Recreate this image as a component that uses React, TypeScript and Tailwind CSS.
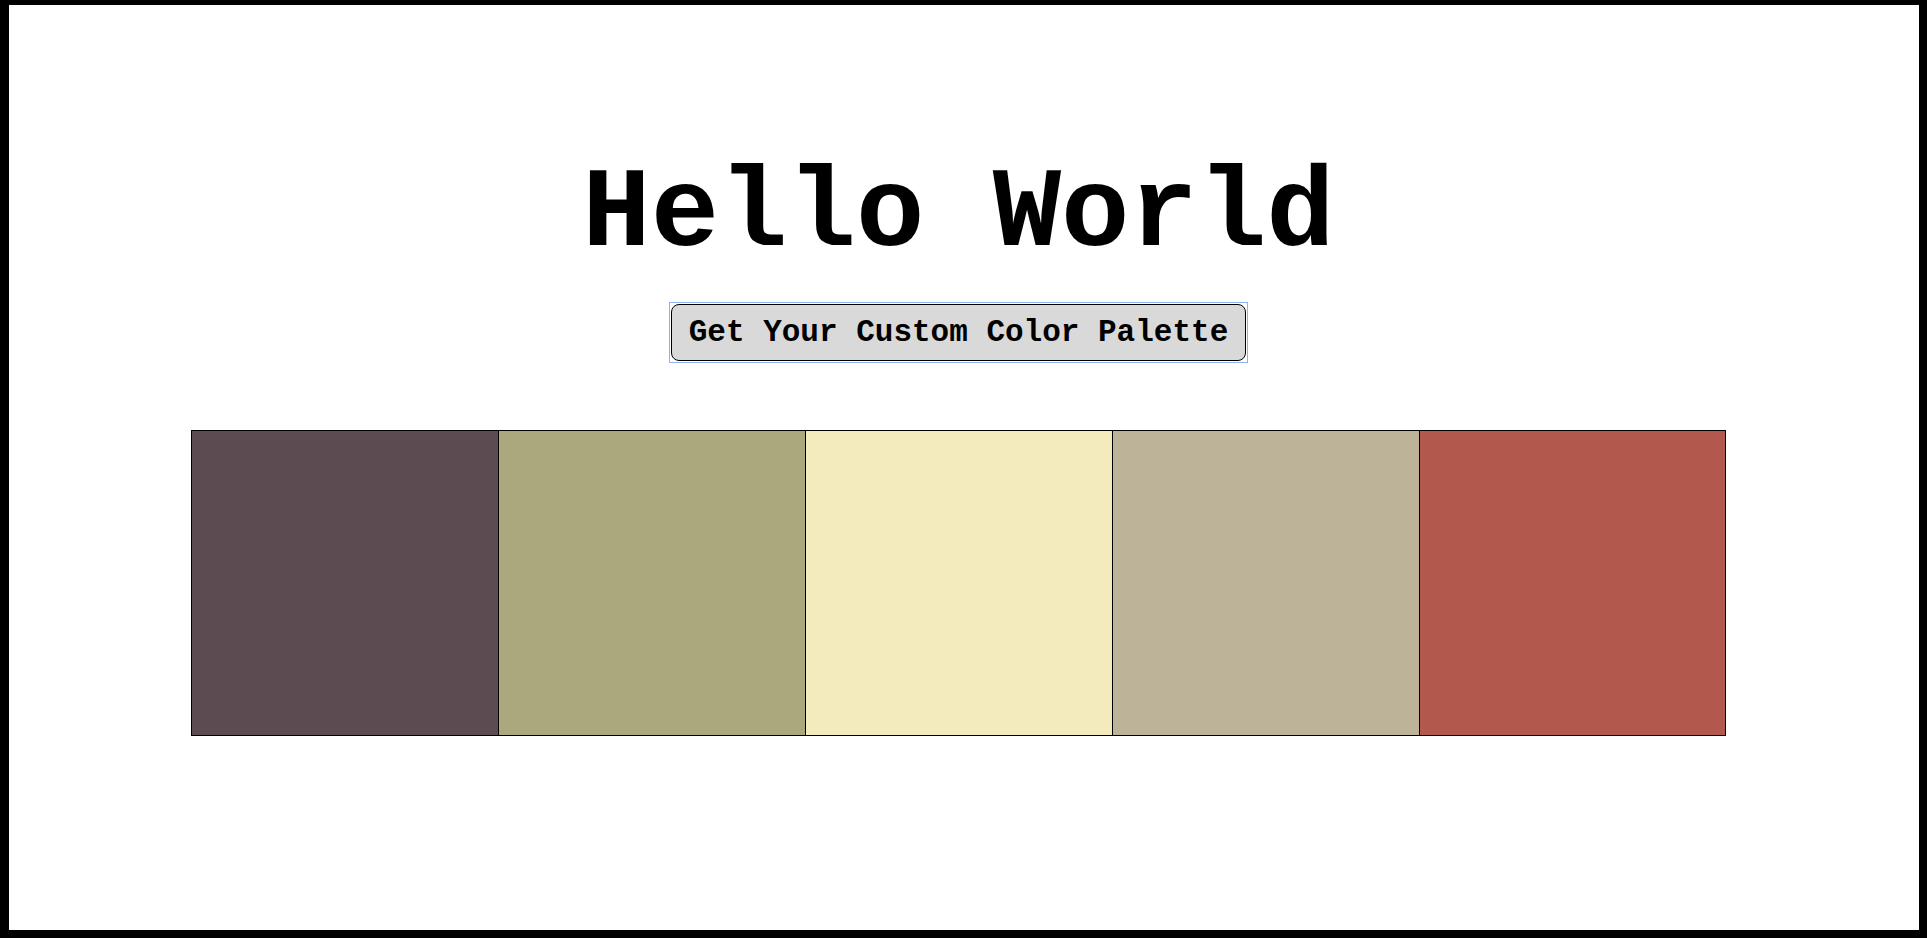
import React from "react";

const colors = ["#5c4c51", "#aca87e", "#f3ebbe", "#bdb398", "#b3584c"];

export default function App() {
  return (
    <div
      className="h-[938px] w-full bg-white border-t-[5px] border-l-[9px] border-r-[8px] border-b-[8px] border-black flex flex-col items-center pt-[153px] pr-[11px]"
      style={{ fontFamily: '"Courier New", "Nimbus Mono PS", "FreeMono", Courier, "Liberation Mono", monospace' }}
    >
      <h1 className="text-[114px] leading-none font-bold text-black">Hello World</h1>

      <div className="mt-[30px] border border-[#8ab2f5] p-px">
        <button className="block h-[57px] px-[17px] rounded-[8px] border border-black bg-[#d9d9d9] text-[31px] font-bold text-black leading-none">
          Get Your Custom Color Palette
        </button>
      </div>

      <div className="mt-[67px] flex">
        {colors.map((c, i) => (
          <div
            key={c}
            className={"w-[307px] h-[306px] border-y border-l border-black" + (i === colors.length - 1 ? " border-r" : "")}
            style={{ backgroundColor: c }}
          />
        ))}
      </div>
    </div>
  );
}
